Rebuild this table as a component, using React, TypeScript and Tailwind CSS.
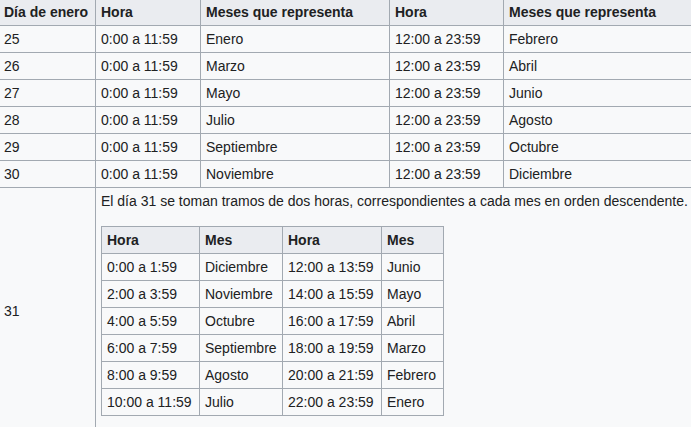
import React from "react";

const rows = [
  ["25", "0:00 a 11:59", "Enero", "12:00 a 23:59", "Febrero"],
  ["26", "0:00 a 11:59", "Marzo", "12:00 a 23:59", "Abril"],
  ["27", "0:00 a 11:59", "Mayo", "12:00 a 23:59", "Junio"],
  ["28", "0:00 a 11:59", "Julio", "12:00 a 23:59", "Agosto"],
  ["29", "0:00 a 11:59", "Septiembre", "12:00 a 23:59", "Octubre"],
  ["30", "0:00 a 11:59", "Noviembre", "12:00 a 23:59", "Diciembre"],
];

const inner = [
  ["0:00 a 1:59", "Diciembre", "12:00 a 13:59", "Junio"],
  ["2:00 a 3:59", "Noviembre", "14:00 a 15:59", "Mayo"],
  ["4:00 a 5:59", "Octubre", "16:00 a 17:59", "Abril"],
  ["6:00 a 7:59", "Septiembre", "18:00 a 19:59", "Marzo"],
  ["8:00 a 9:59", "Agosto", "20:00 a 21:59", "Febrero"],
  ["10:00 a 11:59", "Julio", "22:00 a 23:59", "Enero"],
];

const th =
  "border border-[#a2a9b1] bg-[#eaecf0] text-left font-bold px-[5px] py-[3px] leading-[20px] whitespace-nowrap";
const td =
  "border border-[#a2a9b1] text-left px-[5px] py-[3px] leading-[20px] whitespace-nowrap";

export default function App() {
  return (
    <div
      className="w-[691px] h-[427px] overflow-hidden bg-white text-[14px] text-[#202122]"
      style={{ fontFamily: '"Liberation Sans", Arial, Helvetica, sans-serif' }}
    >
      <div className="-mt-[2px] -ml-[2px]">
        <table className="border-collapse table-fixed bg-[#f8f9fa] w-[694px]">
          <colgroup>
            <col className="w-[97px]" />
            <col className="w-[105px]" />
            <col className="w-[189px]" />
            <col className="w-[114px]" />
            <col className="w-[189px]" />
          </colgroup>
          <thead>
            <tr>
              <th className={th}>Día de enero</th>
              <th className={th}>Hora</th>
              <th className={th}>Meses que representa</th>
              <th className={th}>Hora</th>
              <th className={th}>Meses que representa</th>
            </tr>
          </thead>
          <tbody>
            {rows.map((r) => (
              <tr key={r[0]}>
                {r.map((c, i) => (
                  <td key={i} className={td}>
                    {c}
                  </td>
                ))}
              </tr>
            ))}
            <tr>
              <td className={td}>31</td>
              <td
                colSpan={4}
                className="border border-[#a2a9b1] text-left px-[5px] pt-[3px] pb-[17px] leading-[20px] align-top"
              >
                <p className="whitespace-nowrap">
                  El día 31 se toman tramos de dos horas, correspondientes a cada mes en orden descendente.
                </p>
                <table className="mt-[15px] border-collapse table-fixed bg-[#f8f9fa] w-[342px]">
                  <colgroup>
                    <col className="w-[98px]" />
                    <col className="w-[83px]" />
                    <col className="w-[99px]" />
                    <col className="w-[62px]" />
                  </colgroup>
                  <thead>
                    <tr>
                      <th className={th}>Hora</th>
                      <th className={th}>Mes</th>
                      <th className={th}>Hora</th>
                      <th className={th}>Mes</th>
                    </tr>
                  </thead>
                  <tbody>
                    {inner.map((r) => (
                      <tr key={r[0]}>
                        {r.map((c, i) => (
                          <td key={i} className={td}>
                            {c}
                          </td>
                        ))}
                      </tr>
                    ))}
                  </tbody>
                </table>
              </td>
            </tr>
          </tbody>
        </table>
      </div>
    </div>
  );
}
